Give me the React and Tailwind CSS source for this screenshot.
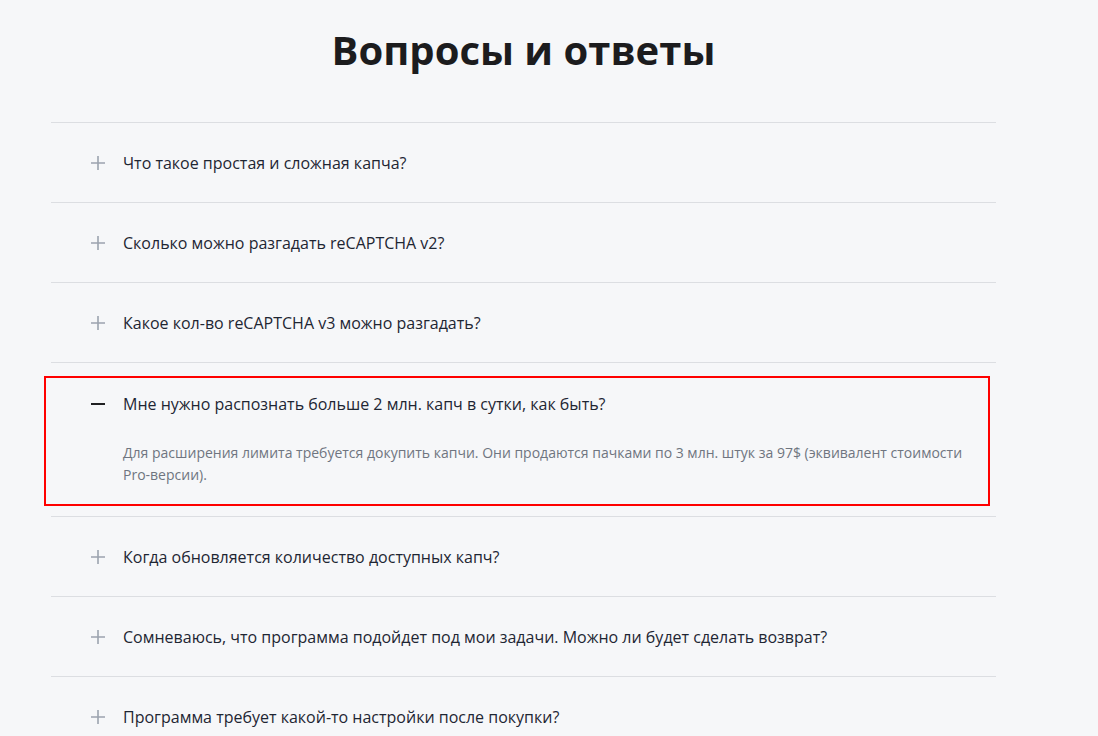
import React, { useState } from 'react';

const faqs = [
  { q: 'Что такое простая и сложная капча?' },
  { q: 'Сколько можно разгадать reCAPTCHA v2?' },
  { q: 'Какое кол-во reCAPTCHA v3 можно разгадать?' },
  {
    q: 'Мне нужно распознать больше 2 млн. капч в сутки, как быть?',
    a: 'Для расширения лимита требуется докупить капчи. Они продаются пачками по 3 млн. штук за 97$ (эквивалент стоимости Pro-версии).'
  },
  { q: 'Когда обновляется количество доступных капч?' },
  { q: 'Сомневаюсь, что программа подойдет под мои задачи. Можно ли будет сделать возврат?' },
  { q: 'Программа требует какой-то настройки после покупки?' }
];

function PlusIcon() {
  return (
    <svg width="14" height="14" viewBox="0 0 14 14" className="shrink-0">
      <path d="M7 0v14M0 7h14" stroke="#9ca3af" strokeWidth="1.6" />
    </svg>
  );
}

function MinusIcon() {
  return (
    <svg width="14" height="14" viewBox="0 0 14 14" className="shrink-0">
      <path d="M0 7h14" stroke="#1f2022" strokeWidth="2" />
    </svg>
  );
}

export default function App() {
  const [open, setOpen] = useState(3);

  return (
    <div className="min-h-screen bg-[#f6f7f9] font-['Open_Sans',sans-serif]">
      <div className="ml-[51px] w-[945px] pt-[24px]">
        <h1 className="text-center text-[40px] leading-[52px] font-bold text-[#1c1c1e]">Вопросы и ответы</h1>
        <div className="mt-[46px] border-t border-[#dcdee2]">
          {faqs.map((item, i) => (
            <div key={i} className="border-b border-[#dcdee2]">
              {open === i ? (
                <div className="mt-[13px] mb-[10px] -ml-[7px] mr-[6px] border-2 border-[#ff0000]">
                  <button onClick={() => setOpen(null)} className="flex w-full items-center gap-[18px] pl-[45px] pt-[14px] text-left">
                    <MinusIcon />
                    <span className="text-[16px] leading-[24px] text-[#1e2633]">{item.q}</span>
                  </button>
                  <p className="mt-[26px] mb-[18px] pl-[77px] pr-[20px] text-[14px] leading-[22px] text-[#6f7580]">{item.a}</p>
                </div>
              ) : (
                <button onClick={() => setOpen(i)} className="flex h-[79px] w-full items-center gap-[18px] pl-[40px] text-left">
                  <PlusIcon />
                  <span className="text-[16px] leading-[24px] text-[#1e2633]">{item.q}</span>
                </button>
              )}
            </div>
          ))}
        </div>
      </div>
    </div>
  );
}
